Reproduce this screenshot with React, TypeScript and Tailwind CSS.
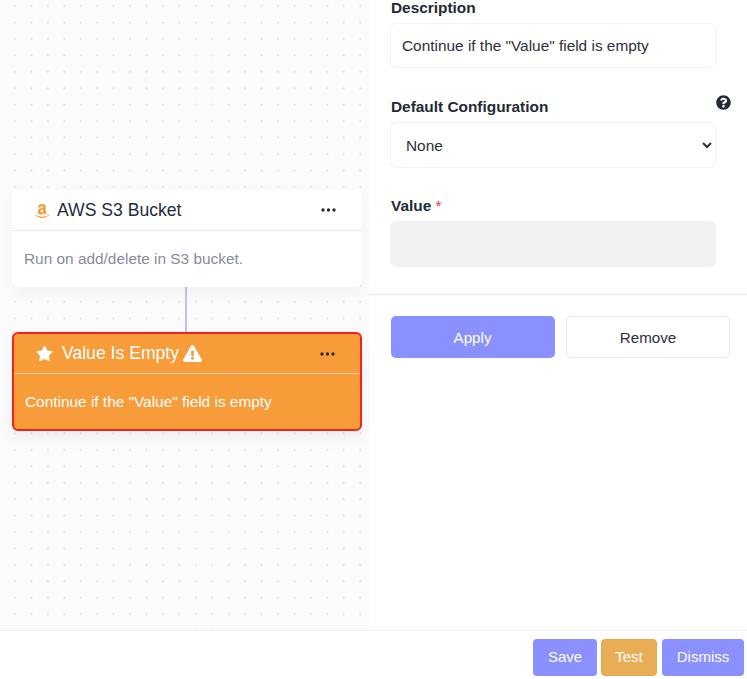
import React from 'react';
import { FaAmazon, FaStar, FaExclamationTriangle, FaQuestionCircle } from 'react-icons/fa';

const font = "font-['Liberation_Sans',Arial,sans-serif]";

const Dots: React.FC<{ className?: string }> = ({ className }) => (
  <svg width="15" height="4" viewBox="0 0 15 4" className={className} fill="#2b2b33">
    <circle cx="2" cy="2" r="1.7" />
    <circle cx="7.5" cy="2" r="1.7" />
    <circle cx="13" cy="2" r="1.7" />
  </svg>
);

const App: React.FC = () => {
  return (
    <div className={`${font} w-[747px] h-[679px] bg-white flex flex-col overflow-hidden text-[#212529]`}>
      <div className="flex h-[630px]">
        {/* Canvas */}
        <div className="relative w-[369px] shrink-0 bg-[#fbfbfb] bg-[radial-gradient(#e8e8e8_1px,transparent_1.2px)] bg-[length:16.45px_16.45px] bg-[position:6.8px_-2.2px]">
          {/* connector */}
          <div className="absolute left-[185px] top-[287px] w-[2px] h-[45px] bg-[#c0c0f6]"></div>

          {/* Trigger node */}
          <div className="absolute left-[12px] top-[190px] w-[350px] h-[97px] bg-white rounded-[6px] shadow-[0_6px_16px_rgba(0,0,0,0.04)]">
            <div className="h-[41px] flex items-center pl-[22px] pr-[25px] border-b border-[#e8e8f2]">
              <FaAmazon className="text-[#f79a36] text-[16px] mr-[7px] mt-[2px]" />
              <span className="text-[17.6px] text-[#1f2d3a] leading-none pt-[2px]">AWS S3 Bucket</span>
              <Dots className="ml-auto mr-[1px]" />
            </div>
            <p className="pl-[12px] pt-[19px] text-[15.4px] leading-[18px] text-[#8a8a9e]">Run on add/delete in S3 bucket.</p>
          </div>

          {/* Condition node */}
          <div className="absolute left-[12px] top-[332px] w-[350px] h-[99px] bg-[#f79c38] border-2 border-[#f5211c] rounded-[6px] shadow-[0_6px_16px_rgba(0,0,0,0.06)]">
            <div className="h-[40px] flex items-center pl-[22px] pr-[25px] border-b border-[#fbd3a4]">
              <FaStar className="text-white text-[17px] mr-[9px]" />
              <span className="text-[17.6px] text-white leading-none">Value Is Empty</span>
              <FaExclamationTriangle className="text-white text-[19px] ml-[4px]" />
              <Dots className="ml-auto" />
            </div>
            <p className="pl-[11px] pt-[19px] text-[15.4px] leading-[18px] text-white">Continue if the "Value" field is empty</p>
          </div>
        </div>

        {/* Settings panel */}
        <div className="flex-1 flex flex-col">
          <div className="pl-[22px] pr-[31px]">
            <label className="block h-[23px] text-[15.4px] leading-[16px] font-bold text-[#212b33]">Description</label>
            <input
              readOnly
              value={'Continue if the "Value" field is empty'}
              className="block w-[326px] -ml-px h-[45px] px-[11px] rounded-[6px] border border-[#f1f1f6] bg-white text-[15.4px] text-[#30303a] outline-none"
            />
            <div className="relative mt-[30px] h-[24px]">
              <label className="block text-[15.4px] leading-[18px] font-bold text-[#212b33]">Default Configuration</label>
              <FaQuestionCircle className="absolute right-[-15px] top-[-3px] text-[15px] text-[#212b33]" />
            </div>
            <select className="block w-[326px] -ml-px h-[46px] pl-[11px] pr-0 rounded-[6px] border border-[#f1f1f6] bg-white text-[15.4px] text-[#30303a] outline-none">
              <option>None</option>
            </select>
            <label className="block mt-[29px] h-[24px] text-[15.4px] leading-[18px] font-bold text-[#212b33]">
              Value <span className="text-[#f0323c] font-normal">*</span>
            </label>
            <div className="w-[326px] -ml-px h-[46px] rounded-[6px] bg-[#f1f1f1]"></div>
          </div>

          <div className="mt-[27px] border-t border-[#e8e8f0]"></div>

          <div className="flex gap-[11px] pl-[22px] pr-[17px] pt-[21px]">
            <button className="w-[164px] h-[42px] pt-[2px] pr-px rounded-[5px] bg-[#8a90ff] text-white text-[15.2px]">Apply</button>
            <button className="flex-1 h-[42px] pt-[2px] rounded-[5px] border border-[#e8e8f0] bg-white text-[15.2px] text-[#30303a]">Remove</button>
          </div>
        </div>
      </div>

      {/* Footer */}
      <div className="flex-1 flex justify-end items-start gap-[4px] pt-[8px] pr-[3px] border-t border-[#f1f1f1]">
        <button className="h-[37px] w-[64px] rounded-[4px] bg-[#8a90ff] text-white text-[15px]">Save</button>
        <button className="h-[37px] w-[56px] mr-px rounded-[4px] bg-[#e8ad55] border border-[#e6a84e] text-white text-[15px]">Test</button>
        <button className="h-[37px] w-[82px] rounded-[4px] bg-[#8a90ff] text-white text-[15px]">Dismiss</button>
      </div>
    </div>
  );
};

export default App;
